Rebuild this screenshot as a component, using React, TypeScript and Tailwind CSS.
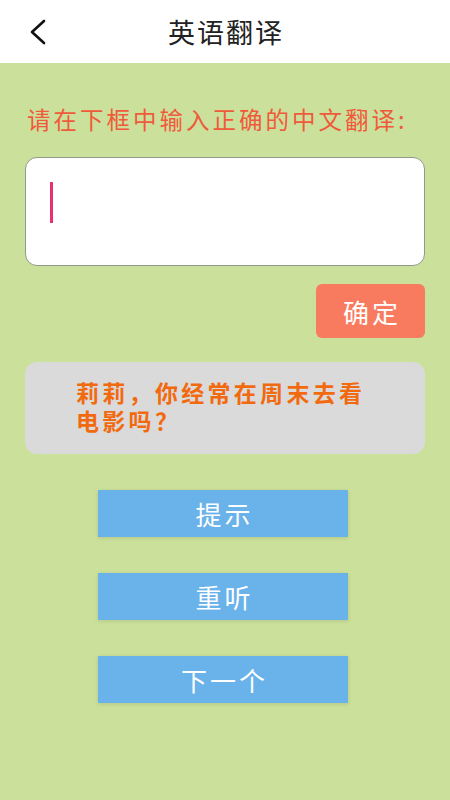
import React from "react";

const font = { fontFamily: '"Noto Sans CJK SC", "Noto Sans", sans-serif' };

export default function App() {
  return (
    <div className="w-[450px] h-[800px] flex flex-col bg-[#cbe09a]" style={font}>
      <div className="h-[63px] bg-white flex items-center relative shrink-0">
        <div className="absolute left-[26px] top-[17px]">
          <svg width="24" height="30" viewBox="0 0 24 30">
            <path d="M18 4 L6 15 L18 26" fill="none" stroke="#111" strokeWidth="2.6" strokeLinecap="round" strokeLinejoin="round" />
          </svg>
        </div>
        <div className="w-full text-center text-[27px] text-[#222] leading-none tracking-[2px] pl-[2px]">英语翻译</div>
      </div>
      <div className="flex flex-col px-[25px]">
        <div className="mt-[40px] pl-[2px] text-[23.5px] leading-[32px] text-[#ef5a3c] tracking-[3px] whitespace-nowrap">请在下框中输入正确的中文翻译:</div>
        <div className="mt-[22px] h-[109px] bg-white rounded-[12px] border border-[#8f9a8a] flex items-center pl-[24px]">
          <div className="w-[2.5px] h-[41px] bg-[#ec2f70] mt-[-18px]" />
        </div>
        <div className="flex justify-end mt-[18px]">
          <div className="w-[109px] h-[54px] bg-[#f97b5f] rounded-[6px] flex items-center justify-center text-white text-[26px] tracking-[3px] pl-[3px]">确定</div>
        </div>
        <div className="mt-[24px] h-[92px] bg-[#dadada] rounded-[12px] pl-[51px] pr-[50px] pt-[16px] text-[#f26a10] text-[23px] font-bold leading-[28px] tracking-[3.3px]">
          莉莉，你经常在周末去看电影吗？
        </div>
        <div className="flex flex-col items-center gap-[36px] mt-[36px] pr-[4px]">
          {["提示", "重听", "下一个"].map((t) => (
            <div key={t} className="w-[250px] h-[47px] bg-[#6ab2ea] shadow-[0_1px_4px_rgba(0,0,0,0.12)] flex items-center justify-center text-white text-[26px] tracking-[3px] pl-[3px]">
              {t}
            </div>
          ))}
        </div>
      </div>
    </div>
  );
}
